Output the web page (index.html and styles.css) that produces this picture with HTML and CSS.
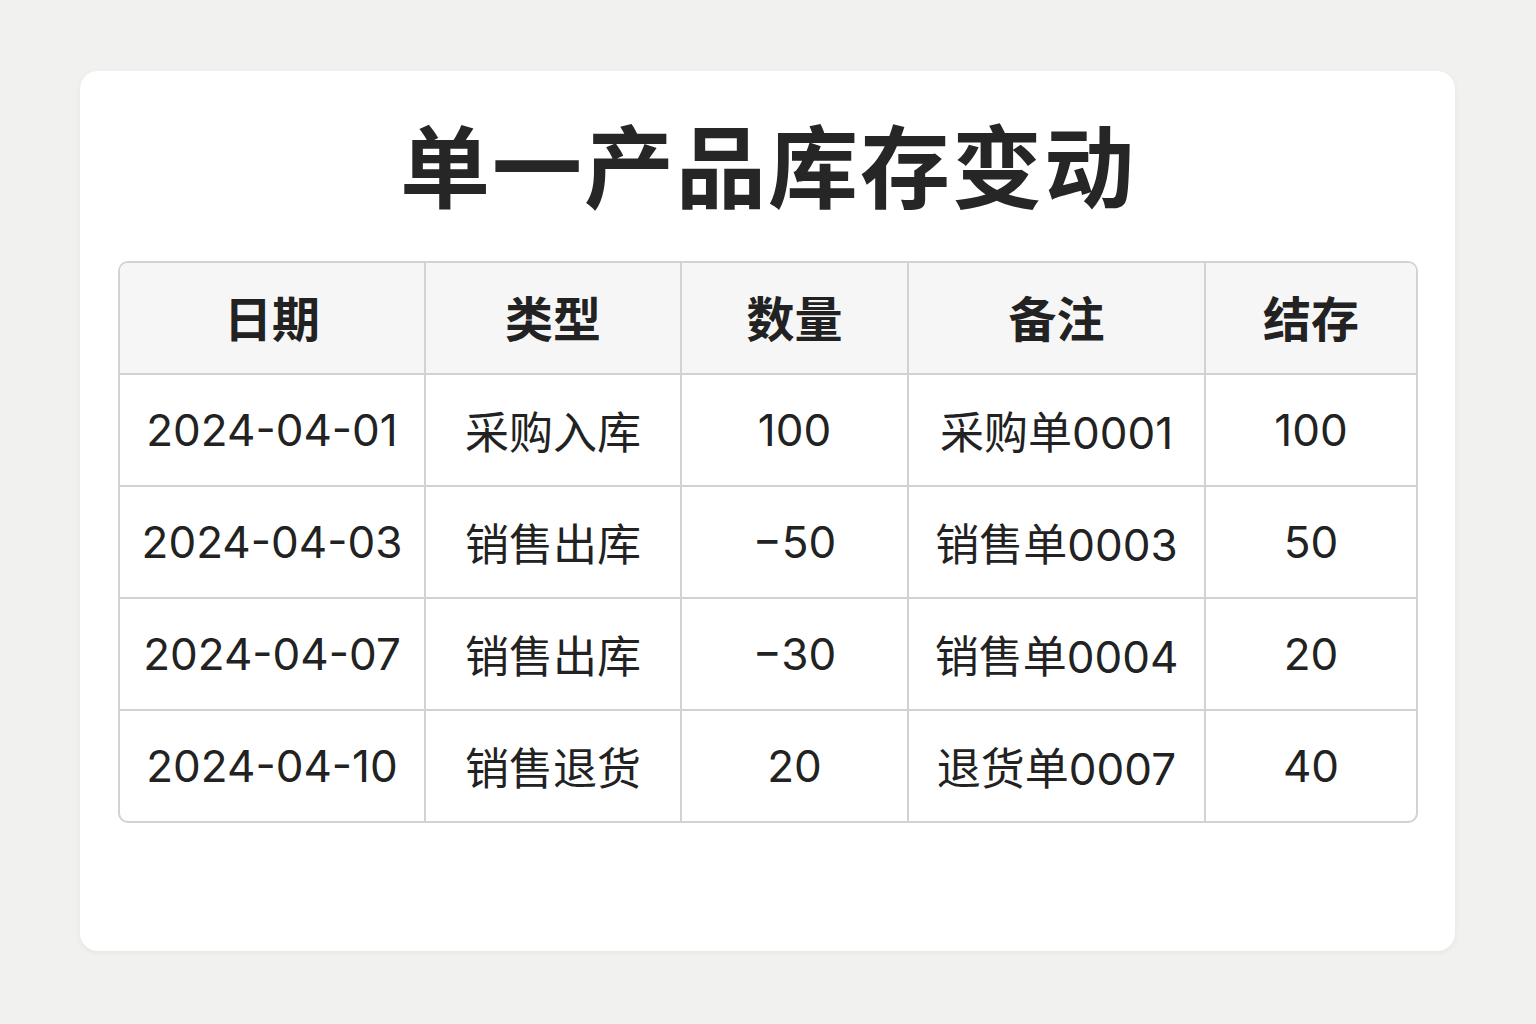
FILE: index.html
```html
<!DOCTYPE html>
<html lang="zh-CN">
<head>
<meta charset="utf-8">
<title>单一产品库存变动</title>
<link rel="stylesheet" href="styles.css">
</head>
<body>
<div class="card">
  <h1 class="title">单一产品库存变动</h1>
  <div class="table-wrap">
    <table class="stock">
      <colgroup>
        <col class="c1"><col class="c2"><col class="c3"><col class="c4"><col class="c5">
      </colgroup>
      <thead>
        <tr><th>日期</th><th>类型</th><th>数量</th><th>备注</th><th>结存</th></tr>
      </thead>
      <tbody>
        <tr><td>2024-04-01</td><td>采购入库</td><td>100</td><td>采购单0001</td><td>100</td></tr>
        <tr><td>2024-04-03</td><td>销售出库</td><td>−50</td><td>销售单0003</td><td>50</td></tr>
        <tr><td>2024-04-07</td><td>销售出库</td><td>−30</td><td>销售单0004</td><td>20</td></tr>
        <tr><td>2024-04-10</td><td>销售退货</td><td>20</td><td>退货单0007</td><td>40</td></tr>
      </tbody>
    </table>
  </div>
</div>
</body>
</html>
```
FILE: styles.css
```css
html, body {
  margin: 0;
  padding: 0;
}
body {
  background: #f1f1f0;
  font-family: "Noto Sans CJK SC", "Noto Sans", sans-serif;
  color: #222;
  width: 1536px;
  height: 1024px;
  overflow: hidden;
}
.card {
  margin: 71px 0 0 80px;
  width: 1375px;
  height: 880px;
  box-sizing: border-box;
  background: #fff;
  border-radius: 18px;
  box-shadow: 0 2px 6px rgba(0,0,0,0.05);
  padding: 0 37px 0 38px;
}
.title {
  margin: 0;
  height: 190px;
  display: flex;
  align-items: center;
  justify-content: center;
  font-size: 90px;
  font-weight: 700;
  letter-spacing: 2px;
  color: #262626;
  padding-bottom: 8px;
  box-sizing: border-box;
}
.table-wrap {
  width: 1300px;
  border: 2px solid #d2d2d2;
  border-radius: 10px;
  overflow: hidden;
  box-sizing: border-box;
}
.stock {
  width: 100%;
  border-collapse: collapse;
  table-layout: fixed;
}
.c1 { width: 305px; }
.c2 { width: 256px; }
.c3 { width: 227px; }
.c4 { width: 297px; }
.c5 { width: auto; }
.stock th, .stock td {
  border: 2px solid #d2d2d2;
  text-align: center;
  padding: 0;
  white-space: nowrap;
}
.stock tr > :first-child { border-left: none; }
.stock tr > :last-child { border-right: none; }
.stock thead tr th { border-top: none; }
.stock tbody tr:last-child td { border-bottom: none; }
.stock th {
  background: #f6f6f6;
  height: 111px;
  font-size: 48px;
  font-weight: 700;
  color: #222;
  padding-bottom: 4px;
  box-sizing: border-box;
}
.stock td {
  height: 110px;
  font-family: "Inter", "Noto Sans CJK SC", sans-serif;
  font-size: 44px;
  font-weight: 400;
  color: #222;
}
```
